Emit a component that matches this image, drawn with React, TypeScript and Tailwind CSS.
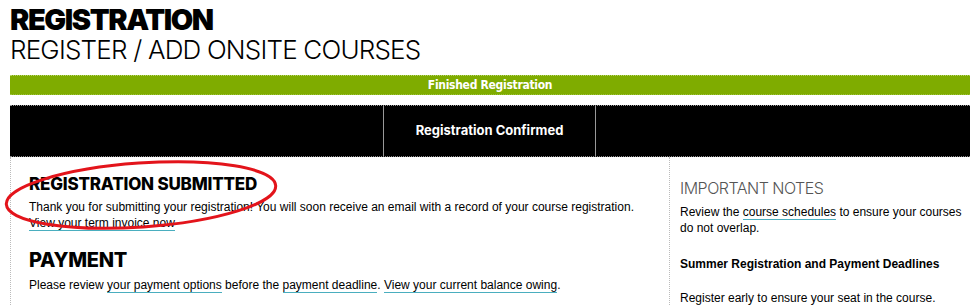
import React from "react";

const futura = { fontFamily: "Inter, 'DejaVu Sans', sans-serif" };

function Link({ children }: { children: React.ReactNode }) {
    return <span className="border-b-[1.5px] border-[#4aaebf]">{children}</span>;
}

export default function App() {
    return (
        <div className="relative w-[975px] h-[305px] overflow-hidden bg-white text-black" style={{ fontFamily: "'Liberation Sans', Arial, sans-serif" }}>
            <div className="pl-[10px] pr-[5px] pt-[5px]">
                {/* page title */}
                <div style={futura}>
                    <h1 className="text-[29px] leading-[30px] font-black tracking-[-1.4px]">REGISTRATION</h1>
                    <h2 className="text-[26px] leading-[30px] font-light tracking-[-0.8px]">REGISTER / ADD ONSITE COURSES</h2>
                </div>

                {/* progress bars */}
                <div className="mt-[10px] h-[20px] bg-[#7fac00] border-t border-dotted border-[#b5d36a] border-b border-b-[#9cc23a] flex items-center justify-center">
                    <span className="text-white text-[12px] font-bold tracking-[-0.3px]" style={{ fontFamily: "'Liberation Sans Narrow', 'DejaVu Sans Condensed', sans-serif" }}>
                        Finished Registration
                    </span>
                </div>
                <div className="mt-[10px] h-[52px] bg-black border-t border-dotted border-[#999] border-b border-b-[#888] grid grid-cols-[374px_212px_1fr]">
                    <div className="border-r border-[#999]"></div>
                    <div className="border-r border-[#999] flex items-center justify-center">
                        <span className="text-white text-[13px] font-bold" style={futura}>Registration Confirmed</span>
                    </div>
                    <div></div>
                </div>

                {/* content */}
                <div className="flex">
                    <div className="w-[659px] border-l border-dotted border-[#bbb] pl-[18px] pt-[16px] h-[160px]">
                        <h3 className="text-[17px] leading-[22px] font-extrabold tracking-[-0.2px]" style={futura}>REGISTRATION SUBMITTED</h3>
                        <p className="text-[12px] leading-[16px] mt-[4px]">
                            Thank you for submitting your registration! You will soon receive an email with a record of your course registration.
                            <br />
                            <Link>View your term invoice now</Link>
                        </p>
                        <h3 className="text-[20px] leading-[24px] font-extrabold mt-[17px] tracking-[-0.3px]" style={futura}>PAYMENT</h3>
                        <p className="text-[12px] leading-[16px] mt-[5px]">
                            Please review <Link>your payment options</Link> before the <Link>payment deadline</Link>.{" "}
                            <Link>View your current balance owing</Link>.
                        </p>
                    </div>
                    <div className="flex-1 border-l border-dotted border-[#bbb] pl-[10px] pt-[21px]">
                        <h3 className="text-[16px] leading-[20px] font-light text-[#555] tracking-[-0.5px]" style={futura}>IMPORTANT NOTES</h3>
                        <p className="text-[12px] leading-[16px] mt-[6px]">
                            Review the <Link>course schedules</Link> to ensure your courses do not overlap.
                        </p>
                        <p className="text-[12px] leading-[16px] font-bold mt-[20px]">Summer Registration and Payment Deadlines</p>
                        <p className="text-[12px] leading-[16px] mt-[18px]">Register early to ensure your seat in the course.</p>
                    </div>
                </div>
            </div>

            {/* annotation circle */}
            <svg className="absolute left-0 top-0 pointer-events-none" width="975" height="305">
                <ellipse cx="141" cy="195" rx="135" ry="32" fill="none" stroke="#e3141b" strokeWidth="3" transform="rotate(-4 141 195)" />
            </svg>
        </div>
    );
}
